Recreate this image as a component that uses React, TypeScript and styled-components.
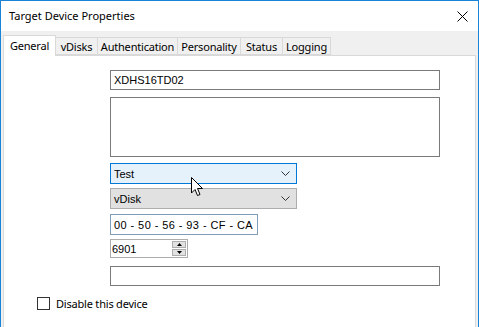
import React from 'react';
import styled, { createGlobalStyle } from 'styled-components';

const GlobalStyle = createGlobalStyle`
  html, body {
    margin: 0;
    padding: 0;
    background: #ffffff;
  }
  body {
    font-family: "Noto Sans", "Liberation Sans", Arial, sans-serif;
    font-size: 11px;
    color: #000000;
  }
`;

// Window frame
const Window = styled.div`
  position: relative;
  width: 479px;
  height: 327px;
  box-sizing: border-box;
  border: 1px solid #1883d7;
  border-bottom: none;
  display: flex;
  flex-direction: column;
  background: #f0f0f0;
  overflow: hidden;
`;

const TitleBar = styled.div`
  height: 30px;
  background: #ffffff;
  display: flex;
  align-items: center;
  justify-content: space-between;
  padding: 0 10px 0 8px;
  flex-shrink: 0;
`;

const Title = styled.span`
  font-family: "Noto Sans", sans-serif;
  font-size: 11px;
  color: #000000;
  margin-top: -1px;
`;

const CloseButton = styled.div`
  width: 12px;
  height: 12px;
  display: flex;
  align-items: center;
  justify-content: center;
`;

const Body = styled.div`
  flex: 1;
  display: flex;
  flex-direction: column;
  padding: 4px 2px 0 2px;
`;

// Tabs
const TabStrip = styled.div`
  display: flex;
  align-items: flex-end;
  height: 20px;
  position: relative;
  z-index: 1;
`;

const Tab = styled.div<{ $active?: boolean; $w: number }>`
  box-sizing: border-box;
  width: ${({ $w }) => $w}px;
  height: ${({ $active }) => ($active ? '21px' : '18px')};
  padding-bottom: ${({ $active }) => ($active ? '2px' : '0')};
  margin-bottom: ${({ $active }) => ($active ? '-1px' : '0')};
  background: ${({ $active }) => ($active ? '#ffffff' : '#f0f0f0')};
  border: 1px solid #d9d9d9;
  border-bottom: ${({ $active }) => ($active ? 'none' : '1px solid #d9d9d9')};
  border-left: ${({ $active }) => ($active ? '1px solid #d9d9d9' : 'none')};
  display: flex;
  align-items: center;
  justify-content: center;
  font-family: "Noto Sans", sans-serif;
  font-size: 11px;
  letter-spacing: -0.2px;
  color: #000000;
  white-space: nowrap;
`;

const Panel = styled.div`
  flex: 1;
  background: #ffffff;
  border: 1px solid #d9d9d9;
  border-bottom: none;
  display: flex;
  flex-direction: column;
  padding-top: 14px;
`;

const Fields = styled.div`
  display: flex;
  flex-direction: column;
  align-items: flex-start;
  margin-left: 106px;
`;

// Inputs
const TextBox = styled.div<{ $w: number; $h: number; $top?: number }>`
  box-sizing: border-box;
  width: ${({ $w }) => $w}px;
  height: ${({ $h }) => $h}px;
  margin-top: ${({ $top }) => $top ?? 0}px;
  border: 1px solid #7a7a7a;
  background: #ffffff;
  display: flex;
  align-items: center;
  padding-left: 3px;
  font-family: "Liberation Sans", Arial, sans-serif;
  font-size: 11px;
  color: #000000;
  white-space: nowrap;
`;

const MacBox = styled(TextBox)`
  border-color: #7f9db9;
  padding-left: 3px;
  letter-spacing: 0.42px;
`;

const Combo = styled.div<{ $focused?: boolean; $top?: number }>`
  box-sizing: border-box;
  width: 187px;
  height: 21px;
  margin-top: ${({ $top }) => $top ?? 0}px;
  border: 1px solid ${({ $focused }) => ($focused ? '#0078d7' : '#adadad')};
  background: ${({ $focused }) => ($focused ? '#e5f1fb' : '#e1e1e1')};
  display: flex;
  align-items: center;
  justify-content: space-between;
  padding: 0 6px 0 3px;
  font-family: "Liberation Sans", Arial, sans-serif;
  font-size: 11px;
  color: #000000;
`;

const Spin = styled.div`
  box-sizing: border-box;
  width: 78px;
  height: 19px;
  margin-top: 4px;
  border: 1px solid #adadad;
  background: #ffffff;
  display: flex;
  align-items: stretch;
  justify-content: space-between;
  font-family: "Liberation Sans", Arial, sans-serif;
  font-size: 11px;
`;

const SpinValue = styled.span`
  display: flex;
  align-items: center;
  padding-left: 1px;
`;

const SpinButtons = styled.div`
  width: 14px;
  margin: 1px 1px 1px 0;
  display: flex;
  flex-direction: column;
  gap: 1px;
`;

const SpinButton = styled.div`
  flex: 1;
  background: #e1e1e1;
  border: 1px solid #adadad;
  display: flex;
  align-items: center;
  justify-content: center;
`;

const CheckRow = styled.label`
  display: flex;
  align-items: center;
  gap: 6px;
  margin: 10px 0 0 33px;
  font-family: "Noto Sans", sans-serif;
  font-size: 11px;
  letter-spacing: -0.2px;
`;

const CheckBox = styled.span`
  box-sizing: border-box;
  width: 13px;
  height: 13px;
  border: 1px solid #333333;
  background: #ffffff;
`;

const Cursor = styled.svg`
  position: absolute;
  left: 190px;
  top: 176px;
`;

const Chevron = () => (
  <svg width="9" height="5" viewBox="0 0 9 5">
    <path d="M0.5 0.5 L4.5 4.5 L8.5 0.5" fill="none" stroke="#333" strokeWidth="1" />
  </svg>
);

const tabs = [
  { label: 'General', w: 53 },
  { label: 'vDisks', w: 42 },
  { label: 'Authentication', w: 80 },
  { label: 'Personality', w: 63 },
  { label: 'Status', w: 42 },
  { label: 'Logging', w: 48 },
];

export default function App() {
  return (
    <>
      <GlobalStyle />
      <Window>
        <TitleBar>
          <Title>Target Device Properties</Title>
          <CloseButton>
            <svg width="11" height="11" viewBox="0 0 11 11">
              <path d="M0.5 0.5 L10.5 10.5 M10.5 0.5 L0.5 10.5" stroke="#000" strokeWidth="1" />
            </svg>
          </CloseButton>
        </TitleBar>
        <Body>
          <TabStrip>
            {tabs.map((t, i) => (
              <Tab key={t.label} $w={t.w} $active={i === 0}>{t.label}</Tab>
            ))}
          </TabStrip>
          <Panel>
            <Fields>
              <TextBox $w={330} $h={20}>XDHS16TD02</TextBox>
              <TextBox $w={330} $h={60} $top={7} />
              <Combo $focused $top={6}>
                <span>Test</span>
                <Chevron />
              </Combo>
              <Combo $top={4}>
                <span>vDisk</span>
                <Chevron />
              </Combo>
              <MacBox $w={148} $h={21} $top={5}>00 - 50 - 56 - 93 - CF - CA</MacBox>
              <Spin>
                <SpinValue>6901</SpinValue>
                <SpinButtons>
                  <SpinButton>
                    <svg width="5" height="3" viewBox="0 0 5 3"><path d="M0 3 L2.5 0 L5 3 Z" fill="#000" /></svg>
                  </SpinButton>
                  <SpinButton>
                    <svg width="5" height="3" viewBox="0 0 5 3"><path d="M0 0 L5 0 L2.5 3 Z" fill="#000" /></svg>
                  </SpinButton>
                </SpinButtons>
              </Spin>
              <TextBox $w={330} $h={20} $top={8} />
            </Fields>
            <CheckRow>
              <CheckBox />
              Disable this device
            </CheckRow>
          </Panel>
        </Body>
        <Cursor width="13" height="20" viewBox="0 0 13 20">
          <path d="M0.5 0.5 L0.5 16 L4 12.5 L6.5 18.5 L9 17.5 L6.5 11.5 L11.5 11.5 Z" fill="#fff" stroke="#000" strokeWidth="1" strokeLinejoin="round" />
        </Cursor>
      </Window>
    </>
  );
}
